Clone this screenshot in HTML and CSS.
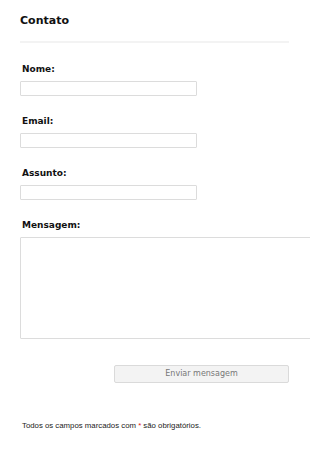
FILE: index.html
```html
<!DOCTYPE html>
<html lang="pt">
<head>
<meta charset="utf-8">
<title>Contato</title>
<link rel="stylesheet" href="styles.css">
</head>
<body>
<div class="page">
  <h1 class="title">Contato</h1>
  <div class="divider"></div>
  <form class="form">
    <div class="field">
      <label class="label" for="nome">Nome:</label>
      <input class="input" id="nome" type="text">
    </div>
    <div class="field">
      <label class="label" for="email">Email:</label>
      <input class="input" id="email" type="text">
    </div>
    <div class="field">
      <label class="label" for="assunto">Assunto:</label>
      <input class="input" id="assunto" type="text">
    </div>
    <div class="field">
      <label class="label" for="mensagem">Mensagem:</label>
      <textarea class="textarea" id="mensagem"></textarea>
    </div>
    <div class="actions">
      <button class="button" type="button">Enviar mensagem</button>
    </div>
  </form>
  <p class="note">Todos os campos marcados com <span class="req">*</span> são obrigatórios.</p>
</div>
</body>
</html>
```

FILE: styles.css
```css
html, body {
  margin: 0;
  padding: 0;
  background: #ffffff;
  overflow: hidden;
}

.page {
  padding: 14px 21px 0 20px;
  font-family: "DejaVu Sans", Verdana, sans-serif;
  color: #111;
}

.title {
  margin: 0;
  font-size: 11px;
  line-height: 14px;
  font-weight: bold;
}

.divider {
  margin-top: 13px;
  height: 2px;
  background: #f3f3f3;
}

.form {
  display: flex;
  flex-direction: column;
  margin-top: 21px;
}

.field {
  display: flex;
  flex-direction: column;
  align-items: flex-start;
  gap: 6px;
  margin-bottom: 20px;
}

.label {
  font-size: 9px;
  line-height: 11px;
  font-weight: bold;
  padding-left: 2px;
}

.input {
  box-sizing: border-box;
  width: 177px;
  height: 15px;
  margin: 0;
  padding: 0 2px;
  border: 1px solid #dcdcdc;
  border-radius: 1px;
  background: #fff;
  outline: none;
}

.textarea {
  box-sizing: border-box;
  width: 310px;
  height: 102px;
  margin: 0;
  padding: 2px;
  border: 1px solid #dcdcdc;
  border-radius: 1px;
  background: #fff;
  resize: none;
  outline: none;
  flex-shrink: 0;
}

.actions {
  display: flex;
  justify-content: flex-end;
  margin-top: 6px;
}

.button {
  box-sizing: border-box;
  width: 175px;
  height: 18px;
  margin: 0;
  padding: 0;
  border: 1px solid #dadada;
  border-radius: 2px;
  background: #f3f3f3;
  color: #777;
  font-family: "DejaVu Sans", Verdana, sans-serif;
  font-size: 8px;
  line-height: 16px;
}

.note {
  margin: 38px 0 0 2px;
  font-family: "Liberation Sans", Arial, sans-serif;
  font-size: 7.8px;
  line-height: 10px;
  color: #222;
}

.req {
  color: #e02020;
}
```
